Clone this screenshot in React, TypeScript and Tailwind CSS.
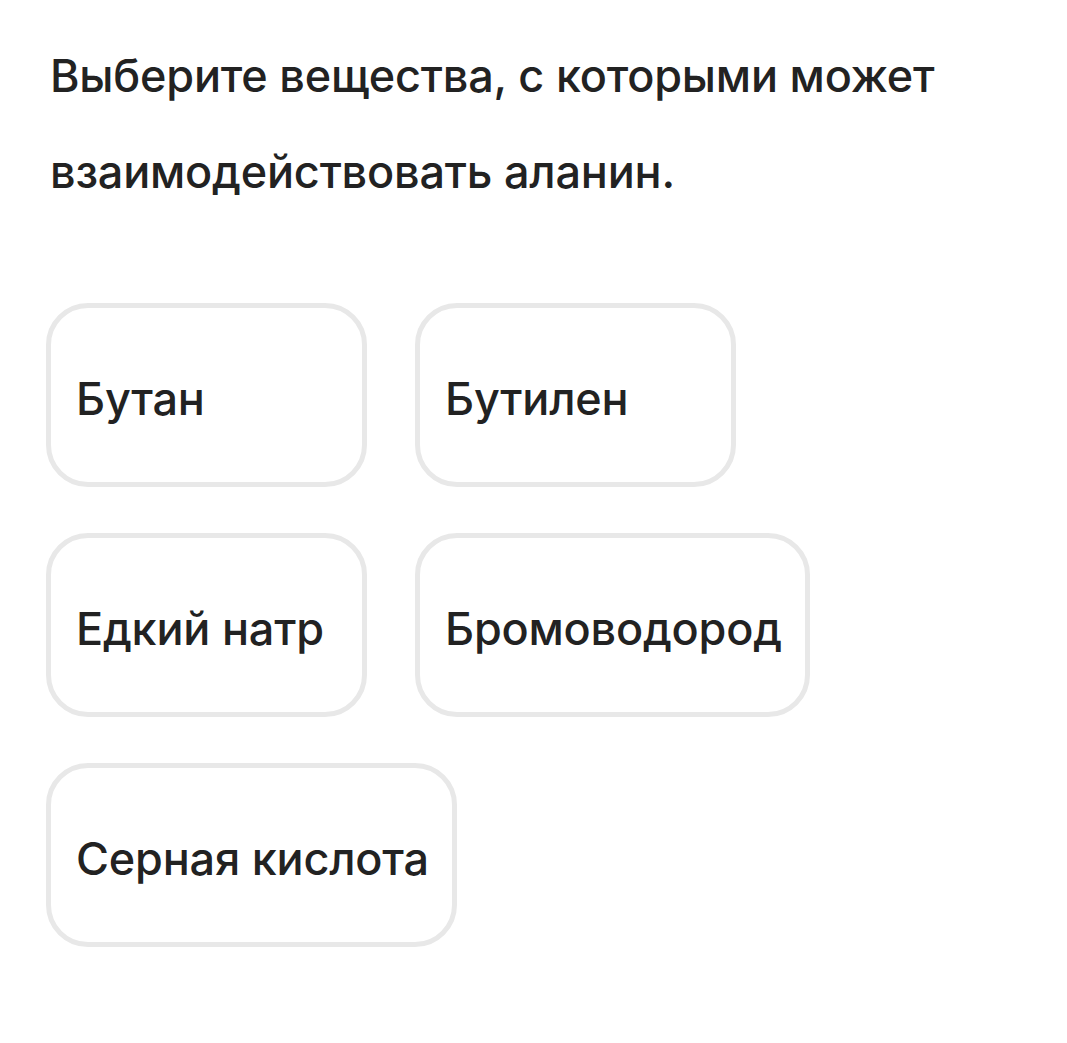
const options = [
  ["Бутан", "Бутилен"],
  ["Едкий натр", "Бромоводород"],
  ["Серная кислота"],
];

export default function App() {
  return (
    <div className="min-h-screen bg-white text-[#222222]" style={{ fontFamily: "Inter, 'Noto Sans', sans-serif" }}>
      <div className="pl-[50px] pr-8 pt-[28px]">
        <h1 className="text-[45px] leading-[96px] font-[450] tracking-[-0.2px]">
          Выберите вещества, с которыми может
          <br />
          взаимодействовать аланин.
        </h1>
        <div className="mt-[83px] flex flex-col gap-[46px] -ml-1">
          {options.map((row, i) => (
            <div key={i} className="flex gap-[48px]">
              {row.map((label) => (
                <button
                  key={label}
                  className="min-w-[321px] h-[184px] rounded-[42px] border-[5px] border-[#e8e8e8] bg-white pl-[25px] pr-[23px] pt-[6px] text-left text-[45px] font-[450] tracking-[-0.2px] leading-none"
                >
                  {label}
                </button>
              ))}
            </div>
          ))}
        </div>
      </div>
    </div>
  );
}
